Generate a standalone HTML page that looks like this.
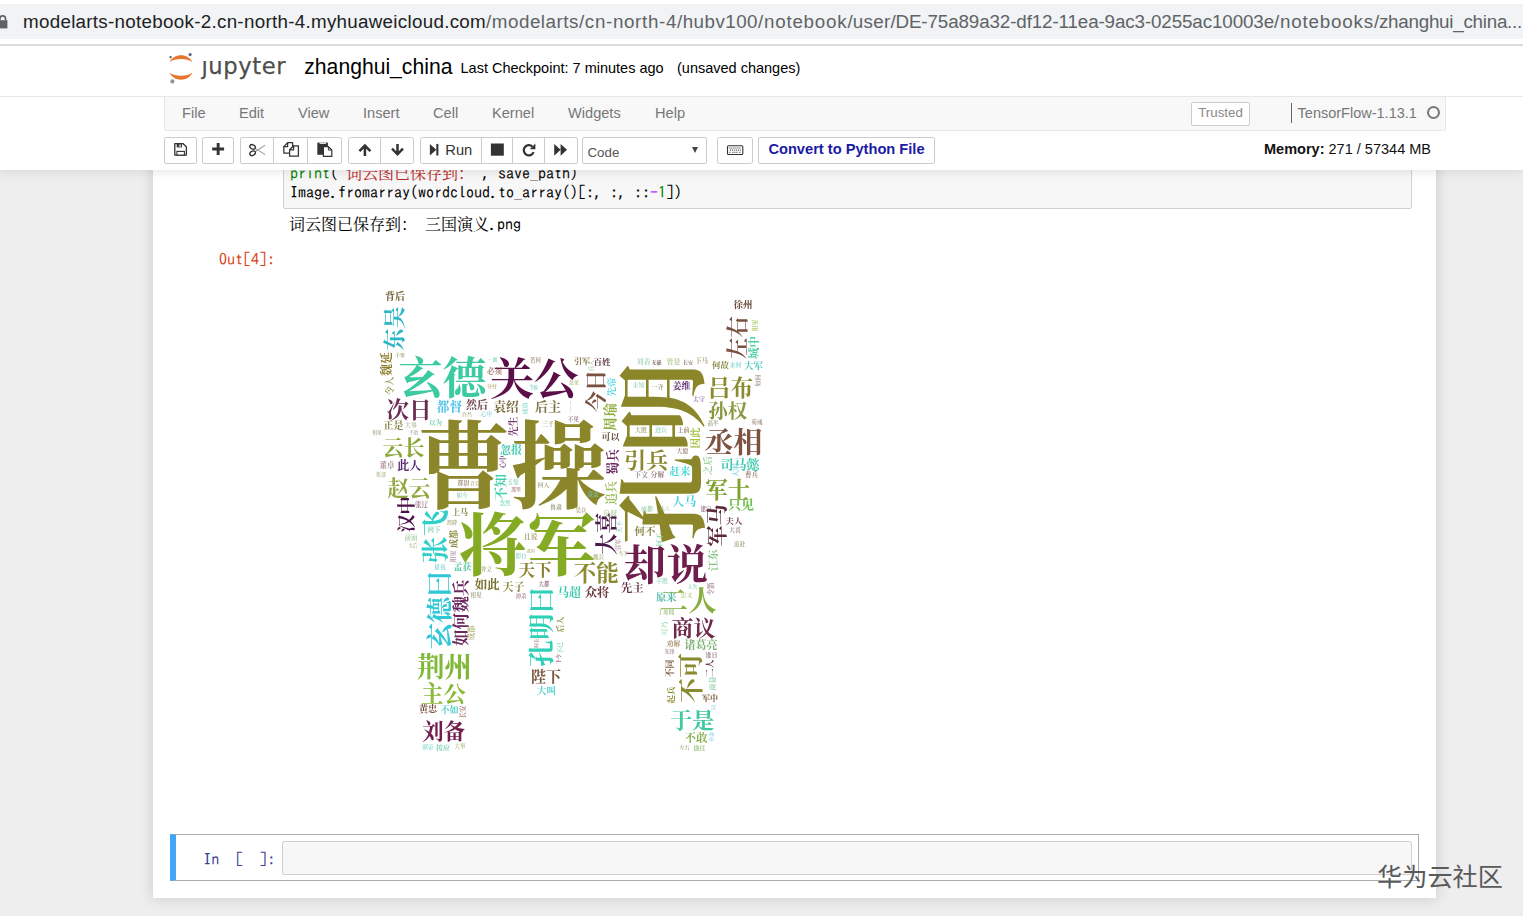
<!DOCTYPE html>
<html lang="zh">
<head>
<meta charset="utf-8">
<title>zhanghui_china - Jupyter Notebook</title>
<style>
*{box-sizing:border-box;margin:0;padding:0}
html,body{width:1523px;height:916px;overflow:hidden;background:#eee;font-family:"Liberation Sans","Noto Sans CJK SC",sans-serif;color:#000}
body{position:relative}
.abs{position:absolute}
/* ---------- browser url bar ---------- */
#urlbar{left:0;top:0;width:1523px;height:44px;background:#fff}
#urlpill{left:-20px;top:4px;width:1560px;height:35px;background:#f1f3f4}
#urlline{left:0;top:44px;width:1523px;height:2px;background:#dcdcdc}
#urltext{left:23px;top:10px;height:24px;line-height:24px;font-size:18.800px;white-space:nowrap;color:#202124;width:1500px}
#urltext span{position:absolute;top:0;white-space:pre}
#urltext .p{color:#5f6368}
/* ---------- jupyter header ---------- */
#header{left:0;top:46px;width:1523px;height:124px;background:#fff;box-shadow:0 0 10px 1px rgba(87,87,87,.17)}
#jtext{-webkit-text-stroke:.250px #4e4e4e;left:201.400px;top:51px;font-family:"DejaVu Sans","Liberation Sans",sans-serif;font-size:22.7px;line-height:30px;color:#4e4e4e;letter-spacing:.6px}
#nbname{left:304.300px;top:52px;font-size:21.150px;line-height:30px;color:#000}
#ckpt{left:460.500px;top:58px;font-size:14.500px;line-height:20px;color:#000;white-space:nowrap;width:400px}
#ck2{position:absolute;left:216.500px;top:0}
#hline{left:0;top:96px;width:1523px;height:1px;background:#e7e7e7}
#menubar{left:164px;top:96px;width:1282px;height:35px;background:#f8f8f8;border:1px solid #e7e7e7;border-radius:2px}
.mi{position:absolute;top:7px;font-size:14.6px;line-height:18px;color:#777;white-space:nowrap}
#trusted{left:1026px;top:4.500px;width:59px;height:24px;border:1px solid #ccc;border-radius:2px;background:#fff;color:#888;font-size:13.300px;line-height:19.500px;text-align:center}
#ksep{left:1125.500px;top:6px;width:1px;height:20px;background:#666}
#kname{left:1132.600px;top:7px;font-size:14.500px;line-height:18px;color:#777;white-space:nowrap}
#kind{left:1262px;top:8.500px;width:13px;height:13px;border:2px solid #777;border-radius:50%}
/* toolbar */
#celltype{left:582px;top:137px;width:125px;height:27px;background:#fff;border:1px solid #ccc;border-radius:2px}
#celltype span{position:absolute;left:4.500px;top:6px;font-size:13.300px;line-height:18px;color:#555}
#celltype i{position:absolute;right:8.300px;top:9px;width:0;height:0;border-left:3.400px solid transparent;border-right:3.400px solid transparent;border-top:6.600px solid #444}
#convert{left:758px;top:137px;width:177px;height:27px;background:#fff;border:1px solid #ccc;border-radius:2px;color:#1a1aa6;font-weight:bold;font-size:14.650px;line-height:22.600px;text-align:center;white-space:nowrap}
#memory{left:1264px;top:140px;font-size:14.530px;line-height:18px;color:#111;white-space:nowrap}
/* ---------- notebook ---------- */
#nb{left:153px;top:150px;width:1283px;height:748px;background:#fff;box-shadow:0 0 12px 1px rgba(87,87,87,.2)}
#codebox{left:283px;top:150px;width:1129px;height:59px;background:#f7f7f7;border:1px solid #cfcfcf;border-radius:2px}
.mono{font-family:"Liberation Mono","Noto Sans CJK SC",monospace}
.cl{position:absolute;left:290px;font-size:16px;line-height:18.700px;white-space:pre;color:#000;font-family:"IPAGothic","Liberation Mono",monospace}
.cj{font-family:"Noto Serif CJK SC","Liberation Serif",serif}
#stdout{left:289px;top:214.400px;font-size:16px;line-height:20px;white-space:pre;color:#000;font-family:"IPAGothic","Liberation Mono",monospace}
#outp{left:219px;top:249.800px;font-size:16px;line-height:18px;color:#d84315;white-space:pre;font-family:"IPAGothic","Liberation Mono",monospace}
#selcell{left:170px;top:834px;width:1249px;height:47px;border:1px solid #ababab;border-left:6px solid #42a5f5;border-radius:1px;background:#fff}
#inbox{left:282px;top:841px;width:1130px;height:34px;background:#f7f7f7;border:1px solid #cfcfcf;border-radius:2px}
#inp{left:203.300px;top:850px;font-size:16px;line-height:18px;color:#3a4290;white-space:pre;font-family:"IPAGothic","Liberation Mono",monospace}
#wm{left:1377px;top:856.800px;font-size:25.200px;line-height:36px;color:#5a5a5a;white-space:nowrap;font-family:"Noto Sans CJK SC",sans-serif;font-weight:400}
#wc{left:360px;top:280px;width:420px;height:480px;filter:blur(.45px)}
#wc text{font-family:"Noto Serif CJK SC",serif;font-weight:700;text-anchor:middle}
</style>
</head>
<body>
<!-- notebook area (below header) -->
<div id="nb" class="abs"></div>
<div id="codebox" class="abs"></div>
<div class="cl" style="top:164.100px"><span style="color:#008000">print</span>(<span style="color:#ba2121">'<span class="cj">词云图已保存到：</span>'</span>, save_path)</div>
<div class="cl" style="top:182.800px">Image.fromarray(wordcloud.to_array()[:, :, ::<span style="color:#aa22ff">-</span><span style="color:#008800">1</span>])</div>
<div id="stdout" class="abs"><span class="cj">词云图已保存到：</span> <span class="cj">三国演义</span>.png</div>
<div id="outp" class="abs">Out[4]:</div>

<svg id="wc" class="abs" viewBox="360 280 420 480">
<!--WC-->
<text x="511" y="500.81" font-size="95.5" fill="#8b8629">曹操</text>
<text transform="translate(662.2 453.25) rotate(-90)" y="34.12" font-size="91" fill="#8b8629">孔明</text>
<text x="527" y="570.49" font-size="68.5" fill="#85ab24">将军</text>
<text x="666" y="579.75" font-size="42" fill="#6f1d4d">却说</text>
<text x="442.5" y="394.0" font-size="44" fill="#3ccba0">玄德</text>
<text x="534.3" y="394.81" font-size="44.3" fill="#5a0f48">关公</text>
<text x="733.5" y="452.88" font-size="29" fill="#7d5240">丞相</text>
<text x="688" y="610.5" font-size="28.8" fill="#88b040">二人</text>
<text transform="translate(435 536.5) rotate(-90)" y="10.12" font-size="27" fill="#30d0c8">张飞</text>
<text transform="translate(439 610) rotate(-90)" y="9.82" font-size="26.2" fill="#30c8d8">玄德曰</text>
<text transform="translate(541.5 626.7) rotate(-90)" y="9.94" font-size="26.5" fill="#30d0b8">孔明曰</text>
<text x="444.5" y="677.31" font-size="27.5" fill="#80b838">荆州</text>
<text transform="translate(691 678) rotate(-90)" y="9.38" font-size="25" fill="#8a8a30">不可</text>
<text transform="translate(393.7 328.5) rotate(-90)" y="8.25" font-size="22" fill="#2fb6c6">东吴</text>
<text transform="translate(737 337.5) rotate(-90)" y="8.06" font-size="21.5" fill="#7a5040">左右</text>
<text transform="translate(595.5 391) rotate(-90)" y="7.88" font-size="21" fill="#7a5040">今日</text>
<text x="730.5" y="395.75" font-size="22.8" fill="#8a8a30">吕布</text>
<text x="727.7" y="417.81" font-size="19.5" fill="#8a9840">孙权</text>
<text x="409" y="418.14" font-size="22.5" fill="#6a2c50">次日</text>
<text x="403.5" y="455.18" font-size="21" fill="#8aa838">云长</text>
<text x="409" y="496.06" font-size="21.5" fill="#90a840">赵云</text>
<text transform="translate(406 514.5) rotate(-90)" y="6.75" font-size="18" fill="#4a1048">汉中</text>
<text x="646.3" y="468.25" font-size="22" fill="#8a8830">引兵</text>
<text x="727.7" y="497.94" font-size="22.5" fill="#80a030">军士</text>
<text x="596.3" y="581.04" font-size="22.5" fill="#8a8a30">不能</text>
<text transform="translate(605.8 533.5) rotate(-90)" y="7.99" font-size="21.3" fill="#4a1848">大喜</text>
<text transform="translate(716 525.5) rotate(-90)" y="7.88" font-size="21" fill="#5a2838">军马</text>
<text x="693.5" y="636.25" font-size="22" fill="#6e2848">商议</text>
<text x="692.3" y="728.25" font-size="22" fill="#40c8a0">于是</text>
<text x="443.5" y="702.44" font-size="22.5" fill="#88b838">主公</text>
<text x="443.7" y="739.06" font-size="21.5" fill="#701d4c">刘备</text>
<text transform="translate(461 596) rotate(-90)" y="6.19" font-size="16.5" fill="#6a2860">魏兵</text>
<text transform="translate(461 629.5) rotate(-90)" y="6.19" font-size="16.5" fill="#6a2860">如何</text>
<text x="535" y="576.19" font-size="16.5" fill="#8a8030">天下</text>
<text x="546" y="681.62" font-size="15" fill="#7a5840">陛下</text>
<text x="449.5" y="410.76" font-size="12.7" fill="#50c0e8">都督</text>
<text x="477" y="408.62" font-size="11" fill="#6b4048">然后</text>
<text x="506" y="411.26" font-size="12.7" fill="#7a6a40">袁绍</text>
<text x="548" y="410.88" font-size="13" fill="#7a7040">后主</text>
<text x="393.5" y="429.25" font-size="10" fill="#8a8a50">正是</text>
<text x="409.3" y="469.5" font-size="12" fill="#5a2870">此人</text>
<text transform="translate(513.5 426.5) rotate(-90)" y="3.75" font-size="10" fill="#7a3a70">先生</text>
<text x="511" y="454.12" font-size="11" fill="#40c8b0">忽报</text>
<text transform="translate(500.5 487) rotate(-90)" y="4.88" font-size="13" fill="#40d0b0">不知</text>
<text transform="translate(612 462) rotate(-90)" y="4.88" font-size="13" fill="#6a2860">蜀兵</text>
<text transform="translate(610 417) rotate(-90)" y="5.25" font-size="14" fill="#90b040">周瑜</text>
<text x="610.5" y="440.38" font-size="9" fill="#6a5040">可以</text>
<text x="740" y="468.88" font-size="13" fill="#40c8b0">司马懿</text>
<text x="741" y="508.88" font-size="13" fill="#70c050">只见</text>
<text x="680" y="474.94" font-size="10.5" fill="#40d8d8">赶来</text>
<text x="684.3" y="506.0" font-size="12" fill="#50d0e0">人马</text>
<text transform="translate(695.5 438) rotate(-90)" y="3.94" font-size="10.5" fill="#a0c040">因此</text>
<text transform="translate(707.5 465.5) rotate(-90)" y="3.56" font-size="9.5" fill="#a0d0a0">之后</text>
<text transform="translate(611 493) rotate(-90)" y="4.5" font-size="12" fill="#a0c060">追兵</text>
<text x="487.3" y="588.69" font-size="12.5" fill="#7a7030">如此</text>
<text x="513.5" y="591.12" font-size="11" fill="#8a8a40">天子</text>
<text x="569" y="596.5" font-size="12" fill="#40c8b0">马超</text>
<text x="597" y="597.11" font-size="12.3" fill="#6a3a40">众将</text>
<text x="632.3" y="592.31" font-size="11.5" fill="#6a3848">先主</text>
<text x="666.3" y="600.86" font-size="10.3" fill="#50b8a8">原来</text>
<text x="645" y="534.94" font-size="10.5" fill="#8a8a48">何不</text>
<text transform="translate(713.3 560.3) rotate(-90)" y="4.01" font-size="10.7" fill="#80c080">江东</text>
<text x="734" y="523.69" font-size="8.5" fill="#7a4858">夫人</text>
<text x="701" y="648.62" font-size="11" fill="#78b070">诸葛亮</text>
<text x="696" y="742.31" font-size="11.5" fill="#88b050">不敢</text>
<text x="428" y="712.38" font-size="9" fill="#7a5040">黄忠</text>
<text x="449.5" y="712.88" font-size="9" fill="#50d0c8">不如</text>
<text x="546.5" y="693.56" font-size="9.5" fill="#50d0d0">大叫</text>
<text x="395" y="299.75" font-size="10" fill="#6b5a2a">背后</text>
<text x="743" y="308.26" font-size="9.5" fill="#6b4a3a">徐州</text>
<text transform="translate(386.5 364) rotate(-90)" y="4.5" font-size="12" fill="#8a7a2a">魏延</text>
<text transform="translate(389.5 386) rotate(-90)" y="3.56" font-size="9.5" fill="#a0a060">令人</text>
<text transform="translate(754 347.5) rotate(-90)" y="4.31" font-size="11.5" fill="#4fd0a8">城中</text>
<text transform="translate(755 325.5) rotate(-90)" y="2.25" font-size="6" fill="#9bbf40" opacity=".72">相见</text>
<text x="753.5" y="368.56" font-size="9.5" fill="#50c8c0">大军</text>
<text x="720.5" y="367.69" font-size="8.5" fill="#8a8a48">何故</text>
<text x="582" y="363.5" font-size="8" fill="#8a7a48">引军</text>
<text x="602" y="364.69" font-size="8.5" fill="#5a3040">百姓</text>
<text transform="translate(611 387) rotate(-90)" y="3.56" font-size="9.5" fill="#50d8e0">先帝</text>
<text x="681.5" y="388.88" font-size="9" fill="#5a2a6a">姜维</text>
<text x="657.5" y="388.75" font-size="6" fill="#7a7a40" opacity=".72">一齐</text>
<text x="638.5" y="387.25" font-size="6" fill="#90c8a0" opacity=".72">未知</text>
<text x="699" y="401.25" font-size="6" fill="#7a50a0" opacity=".72">太守</text>
<text x="643.5" y="363.62" font-size="7" fill="#90c8a0" opacity=".72">刘表</text>
<text x="656.5" y="363.88" font-size="5" fill="#4a3030" opacity=".72">无能</text>
<text x="673.5" y="363.62" font-size="7" fill="#a0b870" opacity=".72">皆是</text>
<text x="688" y="363.88" font-size="5" fill="#6a4a40" opacity=".72">长安</text>
<text x="701.5" y="363.44" font-size="6.5" fill="#8a8a50" opacity=".72">下马</text>
<text x="735.5" y="366.56" font-size="5.5" fill="#60d0c0" opacity=".72">来到</text>
<text x="460" y="514.5" font-size="8" fill="#8a8a50">上马</text>
<text transform="translate(453.5 539) rotate(-90)" y="3.38" font-size="9" fill="#8a8a40">成都</text>
<text x="462.5" y="570.38" font-size="9" fill="#60c8a8">孟获</text>
<text x="530.5" y="539.12" font-size="7" fill="#8a8a50" opacity=".72">且说</text>
<text x="387" y="467.81" font-size="7.5" fill="#8a5a60" opacity=".72">董卓</text>
<text x="411" y="427.25" font-size="6" fill="#a0b080" opacity=".72">大事</text>
<text x="435.5" y="425.44" font-size="6.5" fill="#50c0a0" opacity=".72">以为</text>
<text x="421.5" y="507.44" font-size="6.5" fill="#7a4a60" opacity=".72">张辽</text>
<text x="535.5" y="361.56" font-size="5.5" fill="#8a7a50" opacity=".72">若何</text>
<text transform="translate(502.5 462) rotate(-90)" y="2.44" font-size="6.5" fill="#6a2a70" opacity=".72">心中</text>
<text x="400" y="357.38" font-size="5" fill="#8a8a50" opacity=".72">千里</text>
<text x="494.5" y="374.31" font-size="7.5" fill="#8a5a50" opacity=".72">必须</text>
<text x="492" y="388.38" font-size="5" fill="#a09050" opacity=".72">分付</text>
<text x="533.5" y="388.69" font-size="4.5" fill="#70c0c0" opacity=".72">等候</text>
<text x="492.5" y="361.38" font-size="5" fill="#70c8c0" opacity=".72">一面</text>
<text x="641" y="431.75" font-size="6" fill="#8a8a50" opacity=".72">大胜</text>
<text x="661" y="431.75" font-size="6" fill="#80c8b0" opacity=".72">进兵</text>
<text x="683.5" y="432.25" font-size="6" fill="#7a5a40" opacity=".72">上前</text>
<text x="682.5" y="453.25" font-size="6" fill="#7a5a50" opacity=".72">大愿</text>
<text x="641" y="477.12" font-size="7" fill="#6a5a70" opacity=".72">下文</text>
<text x="657.5" y="477.12" font-size="7" fill="#6a4a50" opacity=".72">分解</text>
<text x="751.5" y="477.44" font-size="6.5" fill="#8a5a50" opacity=".72">曹兵</text>
<text x="713" y="424.56" font-size="5.5" fill="#8a8a60" opacity=".72">高平</text>
<text x="757" y="424.06" font-size="5.5" fill="#8a6a60" opacity=".72">荀彧</text>
<text x="463.5" y="485.25" font-size="6" fill="#8a6a50" opacity=".72">都尉</text>
<text x="475" y="484.88" font-size="5" fill="#9a9a60" opacity=".72">百官</text>
<text x="462" y="497.06" font-size="5.5" fill="#70c8a0" opacity=".72">如今</text>
<text x="543.5" y="486.75" font-size="6" fill="#8a8a60" opacity=".72">何人</text>
<text x="556" y="509.25" font-size="6" fill="#7a7a50" opacity=".72">鲁肃</text>
<text x="505" y="505.06" font-size="5.5" fill="#60d0b0" opacity=".72">忽然</text>
<text x="513" y="484.25" font-size="6" fill="#70c8b0" opacity=".72">玉玺</text>
<text x="516" y="490.88" font-size="5" fill="#9a6a60" opacity=".72">那里</text>
<text x="548" y="426.25" font-size="6" fill="#9a9a70" opacity=".72">三千</text>
<text x="377" y="434.19" font-size="4.5" fill="#9a8a70" opacity=".72">相见</text>
<text x="381" y="476.38" font-size="5" fill="#a0a070" opacity=".72">张郃</text>
<text transform="translate(525 408.5) rotate(-90)" y="2.25" font-size="6" fill="#60d0b0" opacity=".72">成功</text>
<text x="486.5" y="416.06" font-size="5.5" fill="#70c8d0" opacity=".72">心中</text>
<text x="467" y="415.88" font-size="5" fill="#a0a070" opacity=".72">许昌</text>
<text x="452" y="524.38" font-size="5" fill="#8a8a50" opacity=".72">投降</text>
<text x="434" y="532.44" font-size="6.5" fill="#70c8a0" opacity=".72">阙下</text>
<text x="411" y="540.44" font-size="6.5" fill="#90c090" opacity=".72">前面</text>
<text x="413" y="547.19" font-size="4.5" fill="#a0a070" opacity=".72">太后</text>
<text x="440" y="569.25" font-size="6" fill="#60c8c0" opacity=".72">星夜</text>
<text x="486.5" y="570.56" font-size="5.5" fill="#8a8a60" opacity=".72">并立</text>
<text x="476" y="596.56" font-size="5.5" fill="#8a8a60" opacity=".72">相见</text>
<text x="544" y="585.56" font-size="5.5" fill="#6a3a50" opacity=".72">大都</text>
<text x="521" y="598.06" font-size="5.5" fill="#8a5a70" opacity=".72">冲杀</text>
<text transform="translate(452.5 556.5) rotate(-90)" y="2.25" font-size="6" fill="#9a7a90" opacity=".72">相见</text>
<text x="521" y="557.56" font-size="5.5" fill="#70c8b0" opacity=".72">即日</text>
<text x="531" y="553.0" font-size="4" fill="#9a9a60" opacity=".72">此时</text>
<text x="662" y="583.25" font-size="6" fill="#80c8b0" opacity=".72">不胜</text>
<text x="692.5" y="588.38" font-size="5" fill="#70c8b0" opacity=".72">大失</text>
<text x="686.5" y="597.25" font-size="6" fill="#a0c060" opacity=".72">忠义</text>
<text x="666" y="614.06" font-size="5.5" fill="#80b060" opacity=".72">丁原闻</text>
<text transform="translate(711 589) rotate(-90)" y="2.44" font-size="6.5" fill="#8a5a70" opacity=".72">令箭</text>
<text transform="translate(664.5 628.5) rotate(-90)" y="2.62" font-size="7" fill="#90d0a0" opacity=".72">可乃</text>
<text x="673.5" y="646.12" font-size="7" fill="#8a6a40" opacity=".72">劝解</text>
<text x="669.5" y="653.38" font-size="5" fill="#8a6a80" opacity=".72">先锋</text>
<text x="711.5" y="656.75" font-size="6" fill="#7a5060" opacity=".72">谁日</text>
<text transform="translate(669.5 668.5) rotate(-90)" y="3.38" font-size="9" fill="#7a5a40">不同</text>
<text transform="translate(670.5 695) rotate(-90)" y="3.19" font-size="8.5" fill="#8a8a30">起兵</text>
<text transform="translate(710 668.5) rotate(-90)" y="3.38" font-size="9" fill="#6a3848">二人</text>
<text transform="translate(712 683.5) rotate(-90)" y="2.62" font-size="7" fill="#70c090" opacity=".72">商量</text>
<text x="710" y="700.5" font-size="8" fill="#7a5a40">军中</text>
<text x="713.5" y="709.38" font-size="5" fill="#70c8c0" opacity=".72">汉</text>
<text transform="translate(463 712) rotate(-90)" y="2.44" font-size="6.5" fill="#8a5a50" opacity=".72">长安</text>
<text x="443" y="749.62" font-size="7" fill="#50c0a0" opacity=".72">接应</text>
<text x="428" y="749.06" font-size="5.5" fill="#70d0c0" opacity=".72">献帝</text>
<text x="460" y="747.56" font-size="5.5" fill="#a0b060" opacity=".72">大事</text>
<text x="684.5" y="749.38" font-size="5" fill="#8a8a50" opacity=".72">左右</text>
<text x="699.5" y="750.25" font-size="6" fill="#80b060" opacity=".72">擒住</text>
<text transform="translate(711 737) rotate(-90)" y="1.88" font-size="5" fill="#70c8e0" opacity=".72">奉命</text>
<text transform="translate(471.5 633) rotate(-90)" y="2.81" font-size="7.5" fill="#9a9a50" opacity=".72">成都</text>
<text transform="translate(559.5 624.5) rotate(-90)" y="3.0" font-size="8" fill="#9a9a50">后人</text>
<text transform="translate(560 648) rotate(-90)" y="2.25" font-size="6" fill="#70c8b0" opacity=".72">不已</text>
<text transform="translate(536 643) rotate(-90)" y="1.88" font-size="5" fill="#8a5a60" opacity=".72">何在</text>
<text transform="translate(558.5 659) rotate(-90)" y="1.88" font-size="5" fill="#7a3a60" opacity=".72">下令</text>
<text x="735" y="532.25" font-size="6" fill="#8a6a60" opacity=".72">大喜</text>
<text x="739.5" y="546.06" font-size="5.5" fill="#8a8a50" opacity=".72">追赶</text>
<text transform="translate(659 540) rotate(-90)" y="2.62" font-size="7" fill="#80c8a0" opacity=".72">何不</text>
<text transform="translate(618.5 527) rotate(-90)" y="2.25" font-size="6" fill="#70c8b0" opacity=".72">无不</text>
<text transform="translate(618 545) rotate(-90)" y="2.25" font-size="6" fill="#8a6a70" opacity=".72">引军</text>
<text x="623" y="555.38" font-size="5" fill="#9a9a60" opacity=".72">当下</text>
<text x="598.5" y="558.56" font-size="5.5" fill="#9a9a60" opacity=".72">魏兵</text>
<text x="593" y="496.06" font-size="5.5" fill="#70c8c0" opacity=".72">黄盖</text>
<text x="581" y="511.56" font-size="5.5" fill="#8a8a50" opacity=".72">吴兵</text>
<text x="610" y="515.62" font-size="7" fill="#90c080" opacity=".72">皇叔</text>
<text x="647" y="511.25" font-size="6" fill="#80c090" opacity=".72">成都</text>
<text x="665" y="510.38" font-size="5" fill="#a0c080" opacity=".72">夫人</text>
<text x="706" y="510.56" font-size="5.5" fill="#6a4050" opacity=".72">建宁</text>
<text transform="translate(735.5 470) rotate(-90)" y="2.62" font-size="7" fill="#70c8e0" opacity=".72">大叫</text>
<text x="573.5" y="420.56" font-size="5.5" fill="#7a5a60" opacity=".72">不见</text>
<text transform="translate(571 407) rotate(-90)" y="2.25" font-size="6" fill="#8a8a50" opacity=".72">一一</text>
<text x="574" y="383.88" font-size="5" fill="#a0b060" opacity=".72">忽见</text>
<text transform="translate(590.5 366) rotate(-90)" y="2.25" font-size="6" fill="#90c090" opacity=".72">后人</text>
<text x="599" y="364.0" font-size="4" fill="#9a9a90" opacity=".72">三人</text>
<text transform="translate(757.5 380.5) rotate(-90)" y="2.25" font-size="6" fill="#8a7a70" opacity=".72">如何</text>
<text x="414" y="433.69" font-size="4.5" fill="#9a9a90" opacity=".72">不敢</text>
<!--/WC-->
</svg>

<div id="selcell" class="abs"></div>
<div id="inbox" class="abs"></div>
<div id="inp" class="abs">In  [  ]:</div>

<!-- header -->
<div id="header" class="abs"></div>
<div id="urlbar" class="abs"></div>
<div id="urlpill" class="abs"></div>
<div id="urlline" class="abs"></div>
<svg class="abs" style="left:0;top:14px" width="10" height="16" viewBox="0 0 10 16"><path d="M-3 6.200h10.400v8.200h-10.400z" fill="#5f6368"/><path d="M-.100 6.500V4.600a2.800 2.800 0 0 1 5.600 0V6.500" fill="none" stroke="#5f6368" stroke-width="1.700"/></svg>
<div id="urltext" class="abs"><span class="h" style="left:0.0px;letter-spacing:0.288px">modelarts-notebook-2.cn-north-4.myhuaweicloud.com</span><span class="p" style="left:463.0px;letter-spacing:0.531px">/modelarts</span><span class="p" style="left:556.0px;letter-spacing:0.652px">/cn-north-4</span><span class="p" style="left:654.0px;letter-spacing:0.465px">/hubv100</span><span class="p" style="left:735.0px;letter-spacing:0.767px">/notebook</span><span class="p" style="left:824.4px;letter-spacing:0.247px">/user</span><span class="p" style="left:867.4px;letter-spacing:-0.113px">/DE-75a89a32-df12-11ea-9ac3-0255ac10003e</span><span class="p" style="left:1251.0px;letter-spacing:0.811px">/notebooks</span><span class="p" style="left:1351.0px;letter-spacing:-0.247px">/zhanghui_china...</span></div>

<svg class="abs" style="left:164px;top:48px" width="34" height="40" viewBox="164 48 34 40">
<path d="M169.500 62.200C172 57.500 176 55.300 181 55.300S190 57.500 192.400 62.200C189.500 60.100 185.500 59.100 181 59.100S172.400 60.100 169.500 62.200z" fill="#e8762f"/>
<path d="M169.500 72.500C172 77.300 176 79.700 181 79.700S190 77.300 192.400 72.500C189.500 74.700 185.500 75.800 181 75.800S172.400 74.700 169.500 72.500z" fill="#e8762f"/>
<circle cx="190.1" cy="54.600" r="1.600" fill="#616279"/>
<circle cx="170.600" cy="57.200" r="1.100" fill="#55555a"/>
<circle cx="172.400" cy="81.400" r="2.100" fill="#939393"/>
</svg>
<div id="jtext" class="abs">&#x237;upyter</div>
<div id="nbname" class="abs">zhanghui_china</div>
<div id="ckpt" class="abs"><span id="ck1">Last Checkpoint: 7 minutes ago</span><span id="ck2">(unsaved changes)</span></div>

<div id="hline" class="abs"></div>
<div id="menubar" class="abs">
<span class="mi" style="left:17px">File</span>
<span class="mi" style="left:74px">Edit</span>
<span class="mi" style="left:133px">View</span>
<span class="mi" style="left:198px">Insert</span>
<span class="mi" style="left:268px">Cell</span>
<span class="mi" style="left:327px">Kernel</span>
<span class="mi" style="left:403px">Widgets</span>
<span class="mi" style="left:490px">Help</span>
<div id="trusted" class="abs">Trusted</div>
<div id="ksep" class="abs"></div>
<div id="kname" class="abs">TensorFlow-1.13.1</div>
<div id="kind" class="abs"></div>
</div>

<svg class="abs" style="left:160px;top:130px" width="600" height="40" viewBox="160 130 600 40">
<g fill="#fff" stroke="#ccc" stroke-width="1">
<rect x="164.5" y="137.5" width="32" height="26" rx="1.500"/>
<rect x="202.5" y="137.5" width="31" height="26" rx="1.500"/>
<rect x="240.5" y="137.5" width="101" height="26" rx="1.500"/>
<rect x="348.5" y="137.5" width="65" height="26" rx="2"/>
<rect x="420.5" y="137.5" width="157" height="26" rx="2"/>
<rect x="717.5" y="137.5" width="35" height="26" rx="2"/>
<path d="M273.5 137.5v26M307.5 137.5v26M380.5 137.5v26M481.5 137.5v26M512.5 137.5v26M544.5 137.5v26" fill="none"/>
</g>
<!-- save -->
<path d="M174.800 143.700h8.400l3.200 3.300v8.100h-11.600z" fill="#fff" stroke="#333" stroke-width="1.300" stroke-linejoin="round"/>
<rect x="176.700" y="143.900" width="5.300" height="3.500" fill="#3a3a3a"/><rect x="179.300" y="144.500" width="1.500" height="2.300" fill="#e8e8e8"/>
<rect x="176.900" y="151.400" width="7.500" height="3.700" fill="#fff" stroke="#333" stroke-width="1.100"/>
<!-- plus -->
<path d="M212.200 147.600h4.500v-4.500h2.900v4.500h4.500v2.900h-4.500v4.500h-2.900v-4.500h-4.500z" fill="#333"/>
<!-- scissors -->
<g fill="none" stroke="#999" stroke-width="1.100" stroke-linecap="round">
<path d="M255.200 148.400L264.800 154.400M255.200 151.800L264.800 145.400"/>
</g>
<g fill="#fff" stroke="#333" stroke-width="1.400">
<ellipse cx="252.600" cy="146.900" rx="2.900" ry="2.100" transform="rotate(28 252.600 146.900)"/>
<ellipse cx="252.600" cy="153.300" rx="2.900" ry="2.100" transform="rotate(-28 252.600 153.300)"/>
</g>
<!-- copy -->
<g fill="#fff" stroke="#333" stroke-width="1.250" stroke-linejoin="round">
<path d="M287.600 142.600h5v10.400h-8.800v-6.400z"/><path d="M287.600 142.600v4h-3.800" fill="none"/>
<path d="M293.600 145.800h4.800v10.400h-8.800v-6.400z"/><path d="M293.600 145.800v4h-3.800" fill="none"/>
</g>
<!-- paste -->
<path d="M317.300 142.600h10.600v12.200h-10.600z" fill="#333"/><rect x="319.600" y="142.600" width="6.400" height="1.400" fill="#ddd"/>
<path d="M323.400 146.600h5l3.400 3.400v6.400h-8.400z" fill="#fff" stroke="#333" stroke-width="1.200" stroke-linejoin="round"/>
<path d="M328.400 146.600v3.400h3.400" fill="none" stroke="#333" stroke-width="1"/>
<!-- arrows -->
<g fill="none" stroke="#333" stroke-width="2.5" stroke-linejoin="miter">
<path d="M364.9 156v-10.2M359.4 151.2l5.5-5.6 5.5 5.6"/>
<path d="M397.5 143.9v10.2M392 148.7l5.5 5.6 5.5-5.6"/>
</g>
<!-- run -->
<path d="M429.9 143.9l6.4 5.8-6.4 5.8z" fill="#333"/><rect x="436.3" y="143.9" width="2.1" height="11.6" fill="#333"/>
<text x="445.300" y="155" font-family="Liberation Sans, sans-serif" font-size="14.700" fill="#333">Run</text>
<!-- stop -->
<rect x="490.9" y="143.5" width="12.9" height="12.2" fill="#333"/>
<!-- restart -->
<path d="M533.6 152.2a5.1 5.1 0 1 1-1.2-5.6" fill="none" stroke="#333" stroke-width="2.2"/>
<path d="M535.4 143.6v5.6h-5.6z" fill="#333"/>
<!-- ff -->
<path d="M554.2 143.9l6.4 5.9-6.4 5.9zM560.6 143.9l6.4 5.9-6.4 5.9z" fill="#333"/>
<!-- keyboard -->
<rect x="727.500" y="145.700" width="15.300" height="8.800" rx="1" fill="#fff" stroke="#333" stroke-width="1.100"/>
<path d="M729.300 148h12M729.800 150.100h11M729.300 152.300h2M732.300 152.300h6M739.300 152.300h2" stroke="#333" stroke-width="1" stroke-dasharray="1.1 .9" fill="none"/>
</svg>
<div id="celltype" class="abs"><span>Code</span><i></i></div>
<div id="convert" class="abs">Convert to Python File</div>
<div id="memory" class="abs"><b>Memory:</b> 271 / 57344 MB</div>

<div id="wm" class="abs">华为云社区</div>
</body>
</html>
